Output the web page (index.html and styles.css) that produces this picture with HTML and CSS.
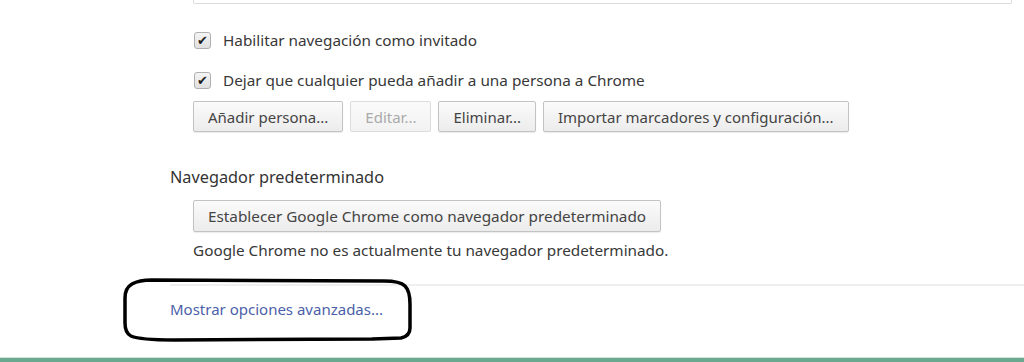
FILE: index.html
```html
<!DOCTYPE html>
<html lang="es">
<head>
    <meta charset="UTF-8">
    <title>Configuración</title>
    <link rel="stylesheet" href="styles.css">
</head>
<body>
    <div class="page">
        <div class="settings">
            <div class="top-box"></div>

            <div class="check-row first">
                <span class="checkbox">&#10004;</span>
                <span>Habilitar navegación como invitado</span>
            </div>
            <div class="check-row">
                <span class="checkbox">&#10004;</span>
                <span>Dejar que cualquier pueda añadir a una persona a Chrome</span>
            </div>
            <div class="button-row">
                <button class="btn">Añadir persona...</button>
                <button class="btn" disabled>Editar...</button>
                <button class="btn">Eliminar...</button>
                <button class="btn">Importar marcadores y configuración...</button>
            </div>

            <h3 class="section-title">Navegador predeterminado</h3>
            <div class="section-body">
                <button class="btn wide">Establecer Google Chrome como navegador predeterminado</button>
                <p class="note">Google Chrome no es actualmente tu navegador predeterminado.</p>
            </div>
        </div>

        <div class="footer">
            <a href="#" class="advanced">Mostrar opciones avanzadas...</a>
        </div>

        <svg class="scribble" width="300" height="70" viewBox="0 0 300 70">
            <path d="M 30 4 L 262 5 Q 278 5 283 10 Q 288 15 288 28 L 288 52 Q 288 60 279 62 L 250 63 L 52 64 Q 18 64 9 60 Q 3 57 3 47 L 3 22 Q 3 12 10 8 Q 17 4 30 4 Z"
                  fill="none" stroke="#000" stroke-width="3.5" stroke-linejoin="round"/>
        </svg>
    </div>
    <div class="bottom-bar"></div>
</body>
</html>
```

FILE: styles.css
```css
body {
    margin: 0;
    background: #fff;
    font-family: "Noto Sans", "Open Sans", sans-serif;
    font-size: 15.3px;
    color: #383838;
}
.page {
    position: relative;
    height: 357px;
}
.settings {
    padding-left: 170px;
}
.top-box {
    margin-left: 23px;
    width: 817px;
    height: 3px;
    border: 1px solid #dcdcdc;
    border-top: none;
    border-radius: 0 0 2px 2px;
}
.check-row {
    display: flex;
    align-items: center;
    gap: 12px;
    margin-left: 24px;
    height: 20px;
    margin-top: 20px;
}
.check-row.first {
    margin-top: 26px;
}
.checkbox {
    display: inline-flex;
    align-items: center;
    justify-content: center;
    width: 15px;
    height: 15px;
    border: 1px solid #b0b0b0;
    border-radius: 3px;
    background: linear-gradient(#f4f4f4, #e0e0e0);
    font-size: 13px;
    line-height: 1;
    color: #1e1e1e;
}
.button-row {
    display: flex;
    gap: 7px;
    margin-left: 23px;
    margin-top: 11px;
}
.btn {
    font-family: inherit;
    font-size: 15px;
    color: #444;
    height: 31px;
    padding: 0 14px;
    border: 1px solid #c3c3c3;
    border-radius: 2px;
    background: linear-gradient(#fbfbfb, #ececec);
    box-shadow: 0 1px 1px rgba(0,0,0,0.08);
}
.btn:disabled {
    color: #aaa;
    border-color: #dcdcdc;
    background: linear-gradient(#fafafa, #f2f2f2);
    box-shadow: none;
}
.section-title {
    margin: 35px 0 0;
    font-size: 16.3px;
    font-weight: normal;
    color: #333;
    line-height: 20px;
}
.section-body {
    margin-left: 23px;
    margin-top: 13px;
}
.btn.wide {
    height: 32px;
    font-size: 15.3px;
}
.note {
    margin: 9px 0 0;
    line-height: 18px;
}
.footer {
    margin-top: 25px;
    margin-left: 170px;
    border-top: 2px solid #efefef;
    padding-top: 13px;
}
.advanced {
    font-size: 15px;
    color: #4b5fa8;
    text-decoration: none;
}
.scribble {
    position: absolute;
    left: 122px;
    top: 276px;
}
.bottom-bar {
    height: 5px;
    border-top: 1px solid #cfe3da;
    background: #6aa98f;
}
```
